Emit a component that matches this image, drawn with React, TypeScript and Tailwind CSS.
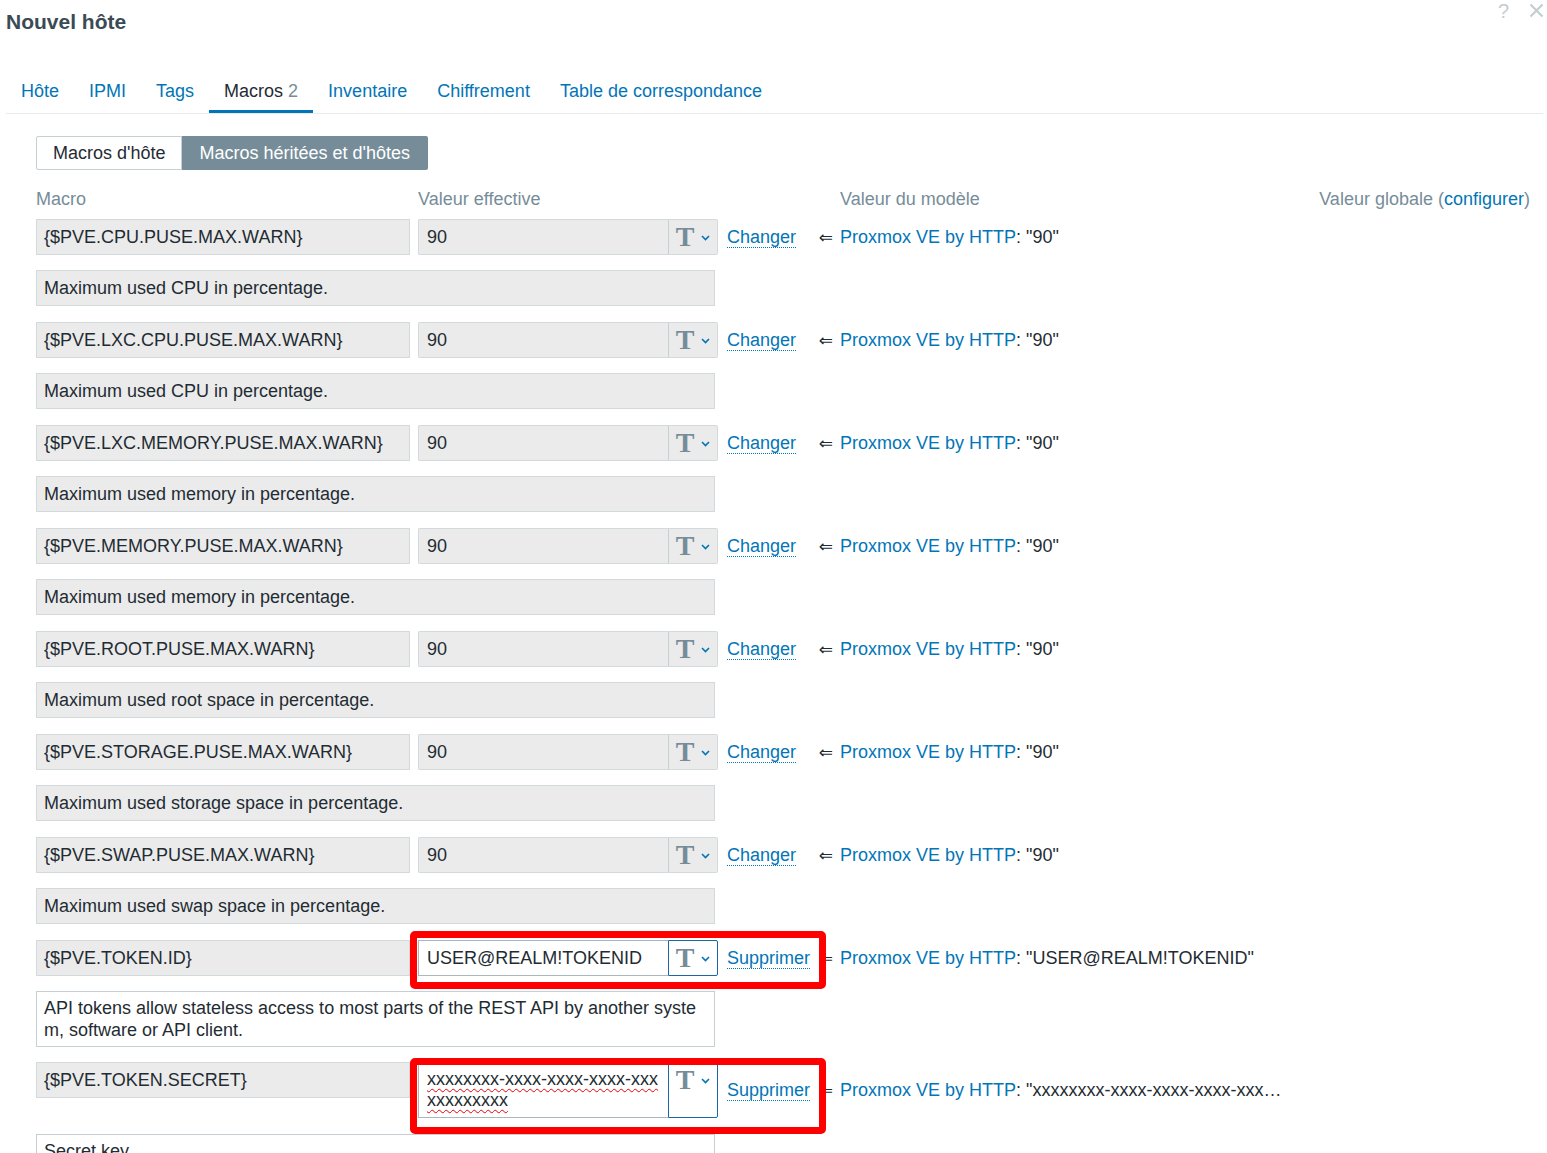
import React from "react";

const ROWS: [string, string][] = [
  ["{$PVE.CPU.PUSE.MAX.WARN}", "Maximum used CPU in percentage."],
  ["{$PVE.LXC.CPU.PUSE.MAX.WARN}", "Maximum used CPU in percentage."],
  ["{$PVE.LXC.MEMORY.PUSE.MAX.WARN}", "Maximum used memory in percentage."],
  ["{$PVE.MEMORY.PUSE.MAX.WARN}", "Maximum used memory in percentage."],
  ["{$PVE.ROOT.PUSE.MAX.WARN}", "Maximum used root space in percentage."],
  ["{$PVE.STORAGE.PUSE.MAX.WARN}", "Maximum used storage space in percentage."],
  ["{$PVE.SWAP.PUSE.MAX.WARN}", "Maximum used swap space in percentage."],
];

const TABS = ["Hôte", "IPMI", "Tags", "Macros", "Inventaire", "Chiffrement", "Table de correspondance"];

function Chevron() {
  return (
    <svg width="9" height="6" viewBox="0 0 9 6" className="mt-[2px]">
      <polyline points="1,1 4.5,4.5 8,1" fill="none" stroke="#0275b8" strokeWidth="1.6" />
    </svg>
  );
}

function TypeButton({ active, tall }: { active?: boolean; tall?: boolean }) {
  return (
    <div
      className={`flex w-[50px] items-start justify-center rounded-r-[2px] border ${
        active ? "border-[#1f65a6] bg-white" : "border-[#d3dadd] border-l-[#c6cfd3] bg-[#ebebeb]"
      } ${tall ? "h-[56px]" : "h-[36px]"}`}
    >
      <div className="flex h-[34px] items-center gap-[7px]">
        <span className="font-['Liberation_Serif',serif] text-[28px] font-bold leading-none text-[#768d99]">T</span>
        <Chevron />
      </div>
    </div>
  );
}

function Template({ value }: { value: string }) {
  return (
    <span className="whitespace-nowrap">
      <span className="text-[#0275b8]">Proxmox VE by HTTP</span>: {value}
    </span>
  );
}

function Action({ label }: { label: string }) {
  return (
    <div className="flex w-[122px] items-center justify-between pl-[9px] pr-[7px]">
      <span className="text-[#0275b8] underline decoration-dotted decoration-1 underline-offset-[4px]">{label}</span>
      <span className="font-['DejaVu_Sans',sans-serif] text-[17px] leading-none text-[#1f2c33]">⇐</span>
    </div>
  );
}

function InheritedRow({ macro, desc }: { macro: string; desc: string }) {
  return (
    <div className="mb-[16px]">
      <div className="flex h-[36px] items-center">
        <div className="flex h-[36px] w-[374px] items-center border border-[#d3dadd] bg-[#ebebeb] px-[7px]">{macro}</div>
        <div className="ml-[8px] flex w-[300px]">
          <div className="flex h-[36px] w-[250px] items-center rounded-l-[2px] border border-r-0 border-[#d3dadd] bg-[#ebebeb] px-[8px]">
            90
          </div>
          <TypeButton />
        </div>
        <Action label="Changer" />
        <Template value={'"90"'} />
      </div>
      <div className="mt-[15px] flex h-[36px] w-[679px] items-center border border-[#d3dadd] bg-[#ebebeb] px-[7px]">
        {desc}
      </div>
    </div>
  );
}

export default function App() {
  return (
    <div className="relative h-[1153px] w-[1547px] overflow-hidden bg-white font-['Liberation_Sans',Arial,sans-serif] text-[18px] text-[#1f2c33]">
      <div className="flex items-start justify-between">
        <h1 className="pl-[6px] pt-[10px] text-[21px] font-bold leading-[24px] text-[#3b4b55]">Nouvel hôte</h1>
        <div className="flex items-start gap-[20px] pr-[3px] text-[20px] leading-[22px] text-[#c3cdd2]">
          <span>?</span>
          <svg width="15" height="15" viewBox="0 0 15 15" className="mt-[3px]">
            <path d="M1.5 1.5 L13.5 13.5 M13.5 1.5 L1.5 13.5" stroke="#c3cdd2" strokeWidth="2.2" />
          </svg>
        </div>
      </div>

      <div className="ml-[6px] mr-[4px] mt-[36px] flex border-b border-[#e6ebed]">
        {TABS.map((t) => {
          const active = t === "Macros";
          return (
            <div
              key={t}
              className={`border-b-[3px] px-[15px] pb-[9px] pt-[11px] leading-[20px] ${
                active ? "border-[#0275b8] text-[#1f2c33]" : "border-transparent text-[#0275b8]"
              }`}
            >
              {t}
              {active && <span className="text-[#768d99]"> 2</span>}
            </div>
          );
        })}
      </div>

      <div className="pl-[36px] pr-[17px]">
        <div className="mt-[22px] flex h-[34px]">
          <div className="flex items-center rounded-l-[2px] border border-[#c6cfd3] bg-white pl-[16px] pr-[15px] pt-[1px]">
            Macros d'hôte
          </div>
          <div className="flex items-center rounded-r-[2px] bg-[#768d99] px-[18px] pt-[1px] text-white">
            Macros héritées et d'hôtes
          </div>
        </div>

        <div className="mt-[19px] flex leading-[20px] text-[#768d99]">
          <div className="w-[382px]">Macro</div>
          <div className="w-[422px]">Valeur effective</div>
          <div className="flex-1">Valeur du modèle</div>
          <div>
            Valeur globale (<span className="text-[#0275b8]">configurer</span>)
          </div>
        </div>

        <div className="mt-[10px]">
          {ROWS.map(([m, d]) => (
            <InheritedRow key={m} macro={m} desc={d} />
          ))}

          {/* token id */}
          <div className="mb-[15px]">
            <div className="flex h-[36px] items-center">
              <div className="flex h-[36px] w-[374px] items-center border border-[#d3dadd] bg-[#ebebeb] px-[7px]">
                {"{$PVE.TOKEN.ID}"}
              </div>
              <div className="ml-[8px] flex w-[300px]">
                <div className="flex h-[36px] w-[250px] items-center border border-r-0 border-[#a9b7be] bg-white px-[8px]">
                  USER@REALM!TOKENID
                </div>
                <TypeButton active />
              </div>
              <Action label="Supprimer" />
              <Template value={'"USER@REALM!TOKENID"'} />
            </div>
            <div className="mt-[15px] w-[679px] border border-[#c6cfd3] bg-white px-[7px] py-[5px] leading-[22px]">
              API tokens allow stateless access to most parts of the REST API by another syste
              <br />
              m, software or API client.
            </div>
          </div>

          {/* token secret */}
          <div className="flex h-[56px] items-start">
            <div className="flex h-[36px] w-[374px] items-center border border-[#d3dadd] bg-[#ebebeb] px-[7px]">
              {"{$PVE.TOKEN.SECRET}"}
            </div>
            <div className="ml-[8px] flex w-[300px]">
              <div className="h-[56px] w-[250px] border border-r-0 border-[#a9b7be] bg-white px-[8px] pt-[6px] leading-[21px]">
                <span className="underline decoration-red-600 decoration-wavy decoration-1 underline-offset-[3px]">
                  xxxxxxxx-xxxx-xxxx-xxxx-xxx
                </span>
                <br />
                <span className="underline decoration-red-600 decoration-wavy decoration-1 underline-offset-[3px]">
                  xxxxxxxxx
                </span>
              </div>
              <TypeButton active tall />
            </div>
            <div className="flex h-[56px] items-center">
              <Action label="Supprimer" />
              <Template value={'"xxxxxxxx-xxxx-xxxx-xxxx-xxx…'} />
            </div>
          </div>
          <div className="mt-[16px] w-[679px] border border-[#c6cfd3] bg-white px-[7px] py-[5px] leading-[22px]">
            Secret key
            <br />
            &nbsp;
          </div>
        </div>
      </div>

      {/* annotation boxes */}
      <div className="pointer-events-none absolute left-[410px] top-[931px] h-[58px] w-[416px] rounded-[5px] border-[7px] border-[#ff0000]" />
      <div className="pointer-events-none absolute left-[410px] top-[1058px] h-[76px] w-[416px] rounded-[5px] border-[7px] border-[#ff0000]" />
    </div>
  );
}
